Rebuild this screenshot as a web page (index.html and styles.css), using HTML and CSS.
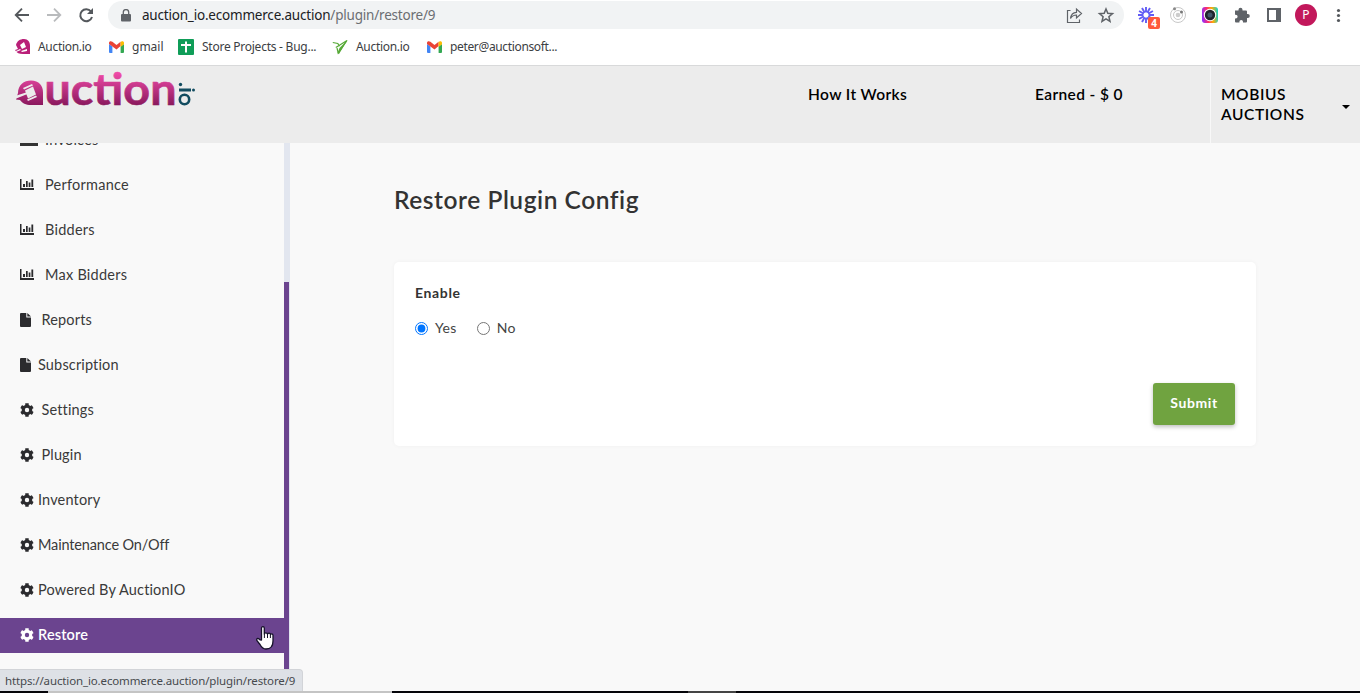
FILE: index.html
```html
<!DOCTYPE html>
<html lang="en">
<head>
<meta charset="utf-8">
<title>Restore Plugin Config</title>
<link rel="stylesheet" href="styles.css">
</head>
<body>
<svg class="defs" width="0" height="0">
  <symbol id="gear" viewBox="0 0 512 512"><path fill="currentColor" d="M487 316l-43-25c4-23 4-47 0-70l43-25c5-3 7-9 5-14-11-36-30-69-55-95-4-4-10-5-15-3l-42 25c-18-15-39-27-61-35V24c0-6-4-11-9-12-37-8-74-8-110 0-5 1-9 6-9 12v49c-22 8-43 20-61 35L88 84c-5-3-11-2-15 2-25 27-44 60-55 96-2 5 1 11 5 14l43 25c-4 23-4 47 0 70l-43 25c-5 3-7 9-5 14 11 36 30 69 55 95 4 4 10 5 15 3l42-25c18 15 39 27 61 35v49c0 6 4 11 9 12 37 8 74 8 110 0 5-1 9-6 9-12v-49c22-8 43-20 61-35l42 25c5 3 11 2 15-2 25-27 44-60 55-96 2-6 0-12-5-14zM256 336a80 80 0 1 1 0-160 80 80 0 0 1 0 160z"/></symbol>
  <symbol id="chart" viewBox="0 0 14 11"><path fill="currentColor" d="M0 0h1.500v9H14v2H0zM3 5h2v3H3zM6 2h1.700v6H6zM8.700 3.500h1.700V8H8.700zM11.400.5h1.800V8h-1.800z"/></symbol>
  <symbol id="file" viewBox="0 0 11 14"><path fill="currentColor" d="M1 0h5.300v4.500H11V13a1 1 0 0 1-1 1H1a1 1 0 0 1-1-1V1a1 1 0 0 1 1-1zM7.300 0L11 3.500H7.300z"/></symbol>
  <symbol id="gmail" viewBox="0 0 15 12"><path fill="#4285f4" d="M0 3l3.400 2.500V12H1a1 1 0 0 1-1-1z"/><path fill="#34a853" d="M15 3l-3.400 2.500V12H14a1 1 0 0 0 1-1z"/><path fill="#ea4335" d="M0 2C0 .2 1.800-.4 3.400.8L7.500 4 11.600.8V5L7.500 8.400 0 3z"/><path fill="#fbbc04" d="M11.600.8C13.200-.4 15 .2 15 2v1.200L11.600 6z"/></symbol>
</svg>

<div class="browser">
  <div class="toolbar">
    <svg class="nav-icons" viewBox="0 0 100 30" fill="none" stroke-width="1.8">
      <path stroke="#54585c" d="M29 15H16M22 8.700L15.700 15l6.300 6.300"/>
      <path stroke="#b9bbbd" d="M47 15h13M54 8.700L60.300 15 54 21.300"/>
      <path stroke="#54585c" stroke-width="2" d="M91 11.500A6 6 0 1 0 92 17"/><path fill="#54585c" d="M93 8v6h-6z"/>
    </svg>
    <div class="omnibox">
      <svg class="lock" viewBox="0 0 10 13"><path fill="#5f6368" d="M1 5h8a1 1 0 0 1 1 1v5.500a1 1 0 0 1-1 1H1a1 1 0 0 1-1-1V6a1 1 0 0 1 1-1z"/><path fill="none" stroke="#5f6368" stroke-width="1.300" d="M2.300 5V3.300a2.700 2.700 0 0 1 5.400 0V5"/></svg>
      <span class="url">auction_io.ecommerce.auction<i>/plugin/restore/9</i></span>
      <svg class="box-icons" viewBox="0 0 54 26" fill="none" stroke="#5f6368"><path stroke-width="1.200" d="M6.500 8.500H3.500v12h12v-3M6.500 16.500c.5-4 2.500-6 6-6.200V7l5 4.500-5 4.500v-3c-3 0-4.500 1-6 3.500z"/><path stroke-width="1.500" d="M42 7l1.800 4.300 4.700.4-3.600 3 1.100 4.600-4-2.500-4 2.500 1.100-4.600-3.600-3 4.700-.4z"/></svg>
    </div>
    <svg class="ext" viewBox="0 0 226 30">
      <path stroke="#625df5" stroke-width="1.900" d="M12 7v5.500M12 17.500V23M4 15h5.500M14.500 15H20M8 8.070l2.750 4.770M13.250 17.160L16 21.930M16 8.070l-2.750 4.770M10.750 17.160L8 21.930M5.070 11l4.770 2.750M14.160 16.250L18.930 19M5.070 19l4.770-2.750M14.160 13.750L18.930 11"/>
      <rect x="14" y="17" width="12" height="12" rx="2" fill="#ff5a3c"/><text class="badge" x="20" y="26.700" text-anchor="middle">4</text>
      <g fill="none" stroke="#c8c8c8"><circle cx="44" cy="15" r="7.500"/><circle cx="44" cy="15" r="4.500"/></g><circle cx="44" cy="15" r="2.300" fill="#ccc"/><circle cx="40.500" cy="8.700" r="1.500" fill="#888"/><circle cx="47.500" cy="12" r="1.500" fill="#777"/>
      <rect x="68" y="7" width="16" height="16" rx="3" fill="url(#rainbow)"/><circle cx="76" cy="15" r="6.200" fill="#fff"/><circle cx="76" cy="15" r="5.200" fill="#20242b"/><circle cx="76" cy="15" r="2.500" fill="#415568"/>
      <path fill="#5f6368" d="M101 10.500h3.500V9.800a2 2 0 0 1 4 0v.7h3.500q1 0 1 1V14h.8a2 2 0 0 1 0 4h-.8v3.500q0 1-1 1h-3v-.8a1.800 1.800 0 0 0-3.600 0v.8H102q-1 0-1-1v-3h.7a1.900 1.900 0 0 0 0-3.800h-.7z"/>
      <path fill="#5f6368" fill-rule="evenodd" d="M133 8h14v14h-14zm2 2v10h7V10z"/>
      <circle cx="172" cy="15" r="11" fill="#c2185b"/><text class="avatar" x="172" y="19.300" text-anchor="middle">P</text>
      <g fill="#54585c"><circle cx="204.500" cy="10.500" r="1.600"/><circle cx="204.500" cy="15.500" r="1.600"/><circle cx="204.500" cy="20.500" r="1.600"/></g>
      <defs><linearGradient id="rainbow" x1="0" y1=".6" x2="1" y2=".5"><stop stop-color="#8c2cff"/><stop offset=".35" stop-color="#ff2d6b"/><stop offset=".65" stop-color="#ffad00"/><stop offset="1" stop-color="#20d0c0"/></linearGradient></defs>
    </svg>
  </div>
  <div class="bookmarks">
    <div class="bm b1"><svg viewBox="0 0 16 16"><path fill="#b91f78" d="M1 6C2 2 5 0 9 0c4 0 6 3 6 7v8H8c-4 0-6-1-8-4l3-1z"/><path fill="#fff" d="M5 6l4-3 2 5-4 2zM1 12l4-2 1 1-5 2zM6 12l6-2v2l-5 1z"/></svg><span>Auction.io</span></div>
    <div class="bm b2"><svg><use href="#gmail"/></svg><span>gmail</span></div>
    <div class="bm b3"><svg viewBox="0 0 16 16"><rect width="16" height="16" rx="1" fill="#0f9d58"/><path fill="#fff" d="M7 2.500h2V5h4v2H9v6.500H7V7H3V5h4z"/></svg><span>Store Projects - Bug...</span></div>
    <div class="bm b4"><svg viewBox="0 0 16 16"><path fill="none" stroke="#56a936" stroke-width="1.200" d="M.8 3.500l5 1 1.700 2.800M5 9l1.200 5L15 1.500 3.800 8.500"/><path fill="#56a936" d="M15.500 1L7 15 5.500 14l2-5z"/></svg><span>Auction.io</span></div>
    <div class="bm b5"><svg><use href="#gmail"/></svg><span>peter@auctionsoft...</span></div>
  </div>
</div>

<header class="header">
  <svg class="logo" viewBox="0 0 210 50">
    <defs><linearGradient id="pink" gradientUnits="userSpaceOnUse" x1="0" y1="7" x2="0" y2="40"><stop stop-color="#f04ba8"/><stop offset="1" stop-color="#87175b"/></linearGradient></defs>
    <path fill="url(#pink)" d="M18 27C18 19 24 14.500 31 14.500c8 0 12 5 12 12V39H31c-5 0-9-2-11-5l-4-.5z"/>
    <path fill="#ececec" d="M23 22l9-4 1 1.500-9 4zM25 24.500l8-4 3 8-8 4zM27 33.500l9-4 1 1.600-9 4zM15 30l11-3.500.8 1.800L15 33z"/>
    <text class="wordmark" x="44.500" y="39.300" textLength="132" lengthAdjust="spacingAndGlyphs" fill="url(#pink)" stroke="url(#pink)">uction</text>
    <g fill="#124c60"><circle cx="180.500" cy="18.500" r="1.700"/><rect x="179" y="22.500" width="12" height="3"/><circle cx="193.500" cy="24" r="1.500"/></g><circle cx="184.500" cy="33.500" r="4.700" fill="none" stroke="#124c60" stroke-width="2.600"/>
  </svg>
  <nav class="links"><a class="how">How It Works</a><a class="earned">Earned - $ 0</a></nav>
  <div class="account"><span>MOBIUS<br>AUCTIONS</span><b class="caret"></b></div>
</header>

<div class="body">
  <aside class="sidebar">
    <ul class="menu">
      <li class="wide"><b class="bar"></b><span>Invoices</span></li>
      <li class="wide"><svg class="chart"><use href="#chart"/></svg><span>Performance</span></li>
      <li class="wide"><svg class="chart"><use href="#chart"/></svg><span>Bidders</span></li>
      <li class="wide"><svg class="chart"><use href="#chart"/></svg><span>Max Bidders</span></li>
      <li class="mid"><svg class="file"><use href="#file"/></svg><span>Reports</span></li>
      <li><svg class="file"><use href="#file"/></svg><span>Subscription</span></li>
      <li class="mid"><svg class="gear"><use href="#gear"/></svg><span>Settings</span></li>
      <li class="mid"><svg class="gear"><use href="#gear"/></svg><span>Plugin</span></li>
      <li><svg class="gear"><use href="#gear"/></svg><span>Inventory</span></li>
      <li class="tight"><svg class="gear"><use href="#gear"/></svg><span>Maintenance On/Off</span></li>
      <li><svg class="gear"><use href="#gear"/></svg><span>Powered By AuctionIO</span></li>
      <li class="active"><svg class="gear"><use href="#gear"/></svg><span>Restore</span></li>
    </ul>
    <div class="track"><div class="thumb"></div></div>
  </aside>
  <main class="main">
    <h1>Restore Plugin Config</h1>
    <section class="card">
      <div class="label">Enable</div>
      <div class="choices"><label><input type="radio" name="enable" checked>Yes</label><label><input type="radio" name="enable">No</label></div>
      <button class="submit">Submit</button>
    </section>
  </main>
</div>

<svg class="cursor" viewBox="0 0 18 24"><path fill="#fff" stroke="#16122a" stroke-width="1.300" stroke-linejoin="round" d="M5.500 14V2.200q0-1.500 1.400-1.500t1.400 1.500V8q0-1.200 1.500-1.200T11.500 8.200q0-1 1.500-1t1.500 1.500q0-.9 1.200-.9t1.300 1.500V15c0 5-2.500 8-7 8-3 0-4.500-1.500-6-4.500L.8 14.300q-.4-1.600 1-1.800 1.300-.1 2.200 1.300z"/><path stroke="#16122a" d="M8.400 8v4M11.500 8v4M14.400 9v3"/></svg>
<div class="status">https://auction_io.ecommerce.auction/plugin/restore/9</div>
<div class="edge"></div>
</body>
</html>
```
FILE: styles.css
```css
* { box-sizing: border-box; }
body { margin: 0; width: 1360px; height: 693px; overflow: hidden; background: #f9f9f9; font-family: Lato, "Liberation Sans", sans-serif; font-variant-ligatures: none; color: #333; }
.defs { position: absolute; }
svg { flex: none; }
.browser { height: 66px; background: #fff; border-bottom: 1px solid #d8d9da; font-family: "Noto Sans", sans-serif; }
.toolbar { display: flex; height: 30px; }
.nav-icons { width: 100px; height: 30px; }
.omnibox { display: flex; align-items: center; width: 1016px; height: 28px; margin: 1px 0 0 8px; padding-left: 13px; border-radius: 14px; background: #f1f3f4; }
.lock { width: 10px; height: 13px; }
.url { margin-left: 11px; font-size: 13.5px; letter-spacing: -.2px; color: #202124; white-space: nowrap; }
.url i { font-style: normal; color: #6b6e72; }
.box-icons { width: 54px; height: 26px; margin: 0 6px 0 auto; }
.ext { width: 226px; height: 30px; margin-left: 10px; }
.badge { font: bold 10px "Noto Sans", sans-serif; fill: #fff; }
.avatar { font: 12px "Noto Sans", sans-serif; fill: #fff; }
.bookmarks { display: flex; height: 33px; align-items: center; padding-left: 15px; font-size: 12px; color: #3c4043; white-space: nowrap; }
.bm { display: flex; align-items: center; flex: none; }
.bm svg { width: 16px; height: 16px; margin-right: 7px; }
.b1 { width: 94px; }
.b2 { width: 69px; }
.b3 { width: 154px; }
.b4 { width: 95px; }
.bookmarks .b2 svg, .bookmarks .b5 svg { width: 15px; height: 12px; margin-right: 8px; }
.bookmarks .b3 svg, .bookmarks .b4 svg { margin-right: 8px; }
.b3 { letter-spacing: -.25px; }
.b5 { letter-spacing: -.35px; }
.b1, .b4 { letter-spacing: -.3px; }

.header { display: flex; height: 77px; background: #ececec; color: #000; font-size: 15.5px; font-weight: 600; line-height: 20px; letter-spacing: .38px; }
.logo { width: 210px; height: 50px; }
.wordmark { font: 700 43px Lato, sans-serif; letter-spacing: 0; stroke-width: .6; }
.links { display: flex; width: 1000px; padding: 18px 0 0 598px; white-space: nowrap; }
.how { width: 227px; }
.account { display: flex; justify-content: space-between; width: 150px; padding: 18px 10px 0 10px; border-left: 1px solid #f8f8f8; letter-spacing: .6px; }
.caret { margin-top: 21px; border: 4px solid transparent; border-top-color: #000; border-bottom: 0; height: 4px; }

.body { display: flex; height: 550px; }
.sidebar { display: flex; width: 290px; overflow: hidden; }
.menu { width: 284px; margin: -20px 0 0; padding: 0; list-style: none; font-size: 14.5px; letter-spacing: .15px; color: #3a3a3a; }
.menu li { display: flex; align-items: center; height: 35px; margin-bottom: 10px; padding: 0 0 2px 20px; white-space: nowrap; }
.menu li svg { margin-right: 4px; color: #2b2b2e; }
.gear { width: 14px; height: 14px; }
.chart { width: 14px; height: 11px; }
.file { width: 11px; height: 14px; }
.menu .file { margin-right: 7px; }
.menu .mid svg { margin-right: 7.5px; }
.menu .mid .file { margin-right: 10.5px; }
.menu .wide svg { margin-right: 11px; }
.menu .wide { letter-spacing: .25px; }
.menu .tight { letter-spacing: -.15px; }
.bar { width: 18px; height: 12px; margin-right: 7px; background: #333; }
.menu .active { background: #6b448f; color: #fff; font-weight: 600; }
.menu .active svg { color: #fff; }
.track { width: 6px; height: 550px; padding-top: 139px; background: #e2e6ef; }
.thumb { width: 5px; height: 411px; background: #6b448f; }

.main { padding: 40px 0 0 104px; }
h1 { margin: 0 0 45px; font-size: 24.5px; line-height: 34px; font-weight: 600; letter-spacing: .55px; }
.card { display: flex; flex-direction: column; width: 862px; height: 184px; padding: 21px; border-radius: 5px; background: #fff; box-shadow: 0 0 4px rgba(0,0,0,.04); }
.label { font-size: 14px; line-height: 20px; font-weight: 700; letter-spacing: .65px; }
.choices { display: flex; gap: 20px; margin-top: 15px; font-size: 14px; line-height: 20px; letter-spacing: .35px; color: #444; }
.choices label { display: flex; align-items: center; }
.choices input { margin: 0 7px 0 0; width: 13px; height: 13px; }
.submit { align-self: flex-end; width: 82px; height: 42px; margin-top: 45px; padding: 0 0 3px; border: 0; border-radius: 3px; background: #70a340; color: #fff; font: 700 14px Lato, sans-serif; letter-spacing: .6px; box-shadow: 0 2px 4px rgba(0,0,0,.25); }

.cursor { position: absolute; left: 256px; top: 626px; width: 18px; height: 24px; }
.status { position: absolute; left: 0; top: 669px; width: 303px; height: 22px; padding-left: 5px; border-radius: 0 4px 0 0; background: #dee1e6; border-top: 1px solid #d2d4d8; border-right: 1px solid #d2d4d8; color: #46494d; font: 11.5px/22px "Noto Sans", sans-serif; letter-spacing: -.13px; white-space: nowrap; }
.edge { position: absolute; left: 0; top: 691px; width: 1360px; height: 2px; background: linear-gradient(90deg, #050509 48px, #c4c4c4 48px 392px, #050509 392px 688px, #444 688px 736px, #050509 736px); }
```
